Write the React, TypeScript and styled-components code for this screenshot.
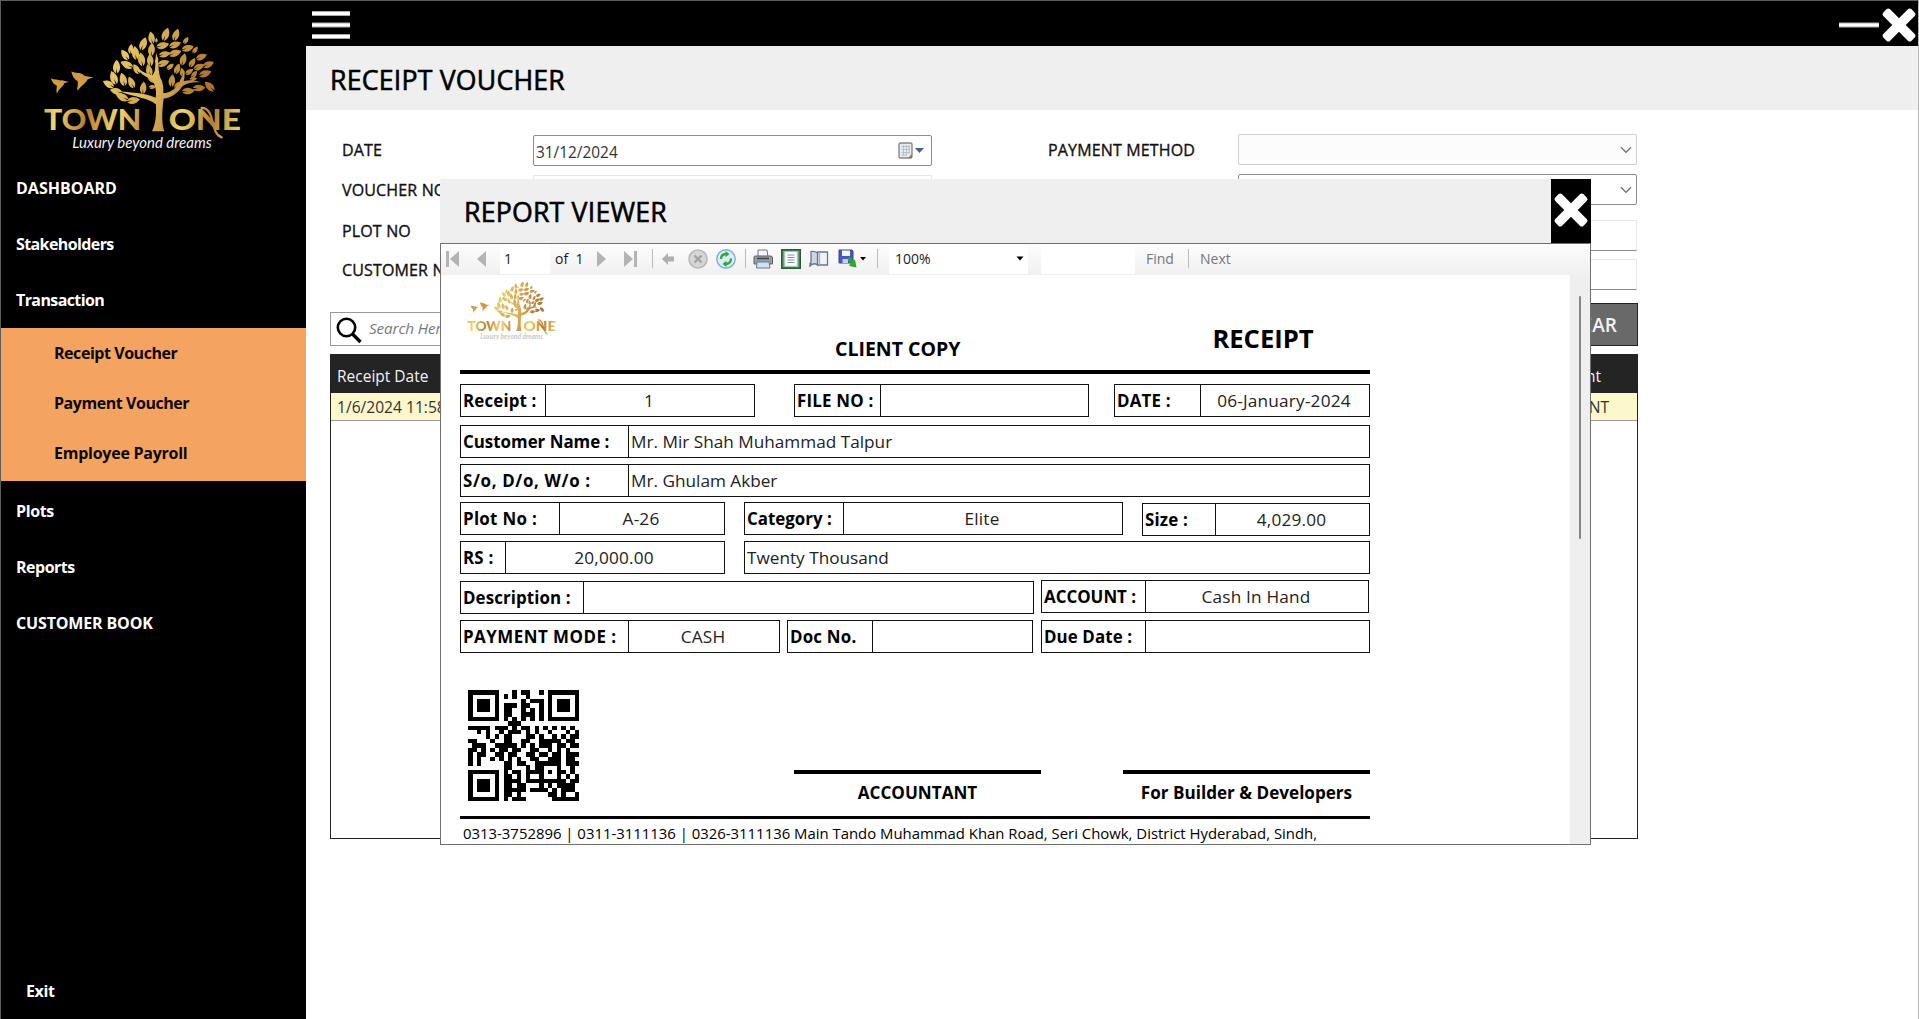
import React from "react";
import styled, { createGlobalStyle } from "styled-components";

const ui = `"Open Sans", "Noto Sans", sans-serif`;

const GlobalStyle = createGlobalStyle`
  * { box-sizing: border-box; }
  body { margin: 0; background: #fff; overflow: hidden; font-family: ${ui}; color: #111; }
`;

/* ---------- shell ---------- */
const Window = styled.div`
  position: relative;
  display: flex;
  width: 1919px;
  height: 1019px;
  overflow: hidden;
  background: #fff;
  border: 1px solid #5c5c5c;
  border-right-color: #b5b5b5;
  border-bottom: 0;
`;
const Sidebar = styled.nav`
  width: 305px;
  flex: none;
  display: flex;
  flex-direction: column;
  background: #000;
`;
const Brand = styled.div`
  height: 159px;
  padding: 26px 0 0 42px;
  flex: none;
`;
const MenuItem = styled.div<{ $ls?: number }>`
  height: 56px;
  flex: none;
  display: flex;
  align-items: center;
  padding: 0 0 1px 15px;
  color: #fff;
  font-weight: 700;
  font-size: 16px;
  letter-spacing: ${(p) => p.$ls ?? 0}px;
  white-space: nowrap;
`;
const SubMenu = styled.div`
  height: 153px;
  flex: none;
  margin-bottom: 2px;
  background: #f4a460;
`;
const SubItem = styled(MenuItem)`
  height: 50px;
  padding-left: 53px;
  color: #0b0704;
`;
const ExitItem = styled(MenuItem)`
  margin-top: auto;
  padding-left: 25px;
`;
const Main = styled.main`
  flex: 1;
  min-width: 0;
  display: flex;
  flex-direction: column;
`;
const TopBar = styled.header`
  height: 45px;
  flex: none;
  display: flex;
  align-items: center;
  background: #000;
  padding: 2px 1px 0 6px;
`;
const Spacer = styled.div`
  flex: 1;
`;
const TitleBand = styled.div`
  height: 64px;
  flex: none;
  display: flex;
  align-items: center;
  padding: 3px 0 0 24px;
  background: #efefef;
`;
const Title = styled.h1`
  margin: 0;
  font-weight: 500;
  font-size: 26.7px;
  letter-spacing: 0.2px;
  -webkit-text-stroke: 0.6px #000;
  color: #000;
`;

/* ---------- form ---------- */
const Content = styled.section`
  width: 1332px;
  padding: 24px 0 0 24px;
`;
const FormGrid = styled.div`
  display: grid;
  grid-template-columns: 203px 399px 116px 190px 399px;
  height: 169px;
`;
const FieldColumn = styled.div`
  display: flex;
  flex-direction: column;
`;
const LabelColumn = styled(FieldColumn)`
  padding-left: 12px;
`;
const RightLabelColumn = styled(FieldColumn)`
  grid-column: 4;
`;
const Label = styled.label<{ $drop?: number }>`
  height: 40px;
  flex: none;
  padding-top: ${(p) => 5 + (p.$drop ?? 0)}px;
  font-size: 16px;
  font-weight: 500;
  letter-spacing: 0.15px;
  -webkit-text-stroke: 0.35px #111;
  color: #111;
  white-space: nowrap;
`;
const Box = styled.div<{ $tone: "date" | "off" | "combo" | "line"; $top?: number }>`
  height: 31px;
  margin-top: ${(p) => p.$top ?? 0}px;
  display: flex;
  align-items: center;
  flex: none;
  padding: 0 ${(p) => (p.$tone === "date" ? 7 : 4)}px 0 2px;
  font-size: 15.4px;
  color: #333;
  border-radius: ${(p) => (p.$tone === "line" ? 0 : 2)}px;
  background: ${(p) => (p.$tone === "off" ? "#fcfcfc" : "#fff")};
  border: 1px solid ${(p) => (p.$tone === "off" ? "#cfcfcf" : p.$tone === "line" ? "#e8e8e8" : "#8c8c8c")};
  ${(p) => p.$tone === "line" && "border-bottom-color: #8a8a8a;"}
`;
const DateText = styled.span`
  flex: 1;
  padding-top: 3px;
`;
const ActionRow = styled.div`
  display: flex;
  align-items: center;
  justify-content: space-between;
  height: 43px;
`;
const SearchBox = styled.div`
  width: 400px;
  height: 34px;
  margin-top: 9px;
  border: 1px solid #999;
  display: flex;
  align-items: center;
  gap: 7px;
  padding: 2px 0 0 5px;
`;
const Hint = styled.span`
  font-style: italic;
  font-size: 15.2px;
  color: #777;
  letter-spacing: -0.1px;
  padding-bottom: 5px;
`;
const ClearButton = styled.button`
  width: 102px;
  height: 43px;
  padding: 0 0 0 2px;
  border: 1px solid #222;
  background: #696969;
  color: #f2f2f2;
  font: 600 19px ${ui};
`;
const Table = styled.div`
  height: 485px;
  margin-top: 8px;
  border: 1px solid #222;
`;
const TableRow = styled.div<{ $head?: boolean }>`
  height: ${(p) => (p.$head ? 38 : 28)}px;
  display: flex;
  justify-content: space-between;
  align-items: center;
  font-size: ${(p) => (p.$head ? 15.5 : 15.6)}px;
  padding: ${(p) => (p.$head ? "4px 36px 0 6px" : "0 28px 0 6px")};
  background: ${(p) => (p.$head ? "#242424" : "#fdf8cc")};
  color: ${(p) => (p.$head ? "#f2f2f2" : "#333")};
  border-bottom: ${(p) => (p.$head ? "0" : "1px solid #999")};
`;

/* ---------- report window ---------- */
const Viewer = styled.section`
  position: absolute;
  left: 439px;
  top: 178px;
  width: 1151px;
  height: 666px;
  display: flex;
  flex-direction: column;
  background: #fff;
  overflow: hidden;
`;
const ViewerHead = styled.div`
  height: 64px;
  flex: none;
  display: flex;
  background: #efefef;
`;
const ViewerTitle = styled(Title)`
  flex: 1;
  padding: 14px 0 0 24px;
`;
const CloseTile = styled.button`
  width: 40px;
  padding: 0 0 2px;
  border: 0;
  background: #000;
  display: flex;
  align-items: center;
  justify-content: center;
`;
const ViewerBody = styled.div`
  flex: 1;
  min-height: 0;
  border: 1px solid #707070;
  display: flex;
  flex-direction: column;
`;
const Toolbar = styled.div`
  height: 31px;
  flex: none;
  display: flex;
  background: linear-gradient(#fdfdfd, #f0f0f0);
`;
const Slot = styled.div<{ $w: number; $fill?: boolean; $gray?: boolean; $pad?: number }>`
  width: ${(p) => p.$w}px;
  height: 30px;
  padding-bottom: 1px;
  flex: none;
  display: flex;
  align-items: center;
  padding-left: ${(p) => p.$pad ?? 0}px;
  background: ${(p) => (p.$fill ? "#fff" : "transparent")};
  color: ${(p) => (p.$gray ? "#767676" : "#1c1c1c")};
  font-size: 14px;
  letter-spacing: 0;
  white-space: pre;
`;
const Divider = styled.div`
  width: 1px;
  height: 19px;
  background: #bbb;
`;
const Scroller = styled.div`
  flex: 1;
  min-height: 0;
  display: flex;
`;
const Page = styled.article`
  flex: 1;
  overflow: hidden;
  padding: 6px 0 0 19px;
  color: #000;
`;
const Track = styled.div`
  width: 20px;
  flex: none;
  padding: 21px 0 0 9px;
  background: #efefef;
`;
const Thumb = styled.div`
  width: 2px;
  height: 243px;
  border-radius: 1px;
  background: #858585;
`;
const Sheet = styled.div`
  width: 910px;
  display: flex;
  flex-direction: column;
`;
const SheetHead = styled.div`
  display: flex;
  height: 89px;
  flex: none;
  padding-left: 7px;
  font-weight: 700;
`;
const CopyName = styled.div`
  font-size: 19.5px;
  margin: 54px 0 0 278px;
`;
const DocName = styled.div`
  font-size: 25.6px;
  margin: 40px 0 0 252px;
`;
const Rule = styled.div<{ $h: number }>`
  height: ${(p) => p.$h}px;
  flex: none;
  background: #000;
`;
const Line = styled.div<{ $top: number }>`
  display: flex;
  height: 32px;
  flex: none;
  margin-top: ${(p) => p.$top}px;
`;
const Cell = styled.div<{ $w: number; $gap?: number; $drop?: number }>`
  width: ${(p) => p.$w}px;
  height: 33px;
  flex: none;
  margin: ${(p) => p.$drop ?? 0}px 0 0 ${(p) => p.$gap ?? 0}px;
  border: 1px solid #111;
  display: flex;
`;
const Name = styled.div<{ $w: number; $ls?: number }>`
  width: ${(p) => p.$w}px;
  flex: none;
  border-right: 1px solid #111;
  padding-left: 2px;
  font-size: 16.9px;
  line-height: 31px;
  font-weight: 700;
  letter-spacing: ${(p) => p.$ls ?? 0}px;
  white-space: nowrap;
`;
const Value = styled.div<{ $left?: boolean }>`
  flex: 1;
  padding: 0 ${(p) => (p.$left ? 0 : 2)}px 0 ${(p) => (p.$left ? 2 : 0)}px;
  text-align: ${(p) => (p.$left ? "left" : "center")};
  font-size: 17.2px;
  line-height: 31px;
  letter-spacing: ${(p) => (p.$left ? 0 : 0.2)}px;
  color: #222;
  white-space: nowrap;
`;
const Closing = styled.div`
  display: flex;
  align-items: flex-end;
  height: 126px;
  flex: none;
  margin-top: 38px;
  padding-left: 8px;
`;
const QrHolder = styled.div`
  height: 126px;
  width: 111px;
`;
const Signature = styled.div<{ $gap: number }>`
  width: 247px;
  height: 46px;
  margin-left: ${(p) => p.$gap}px;
  border-top: 4px solid #000;
  text-align: center;
  font-weight: 700;
  font-size: 17.1px;
  line-height: 38px;
  white-space: nowrap;
`;
const Address = styled.div`
  padding: 4px 0 0 3px;
  font-size: 14.9px;
  line-height: 20px;
  white-space: nowrap;
`;

/* ---------- drawings ---------- */
const leaves: number[][] = [
  [455, 113, -15, 1], [497, 103, 15, 1.1], [528, 104, 15, 1], [430, 131, 15, 1.1], [393, 147, 0, 0.8], [376, 165, -40, 1],
  [407, 159, -12, 1.1], [455, 148, 0, 1.05], [488, 135, 70, 1.05], [525, 133, 65, 1], [558, 120, 30, 0.65], [563, 143, 70, 1],
  [586, 149, 30, 0.65], [494, 161, 72, 0.95], [525, 158, 65, 1.05], [604, 169, 60, 0.95], [550, 178, 10, 1], [425, 178, -15, 1.1],
  [451, 180, -10, 1], [382, 194, -70, 1.1], [577, 187, 25, 0.85], [490, 188, 65, 1], [350, 200, -5, 1.1], [410, 207, -35, 0.9],
  [625, 192, 60, 0.95], [597, 199, 60, 0.95], [511, 199, 45, 0.7], [532, 206, 15, 0.9], [448, 211, -20, 1], [568, 214, 50, 0.75],
  [615, 219, 65, 1.05], [342, 233, -25, 1.15], [370, 238, -20, 1.1], [327, 252, -65, 1], [350, 273, -80, 1], [395, 247, -30, 1],
  [430, 263, 0, 1], [516, 241, 0, 1], [583, 222, 30, 0.7], [455, 238, -60, 0.75], [565, 271, 80, 1], [597, 262, 80, 1],
  [630, 259, -50, 1.05], [368, 291, -70, 1.1], [400, 299, 75, 1.05], [531, 254, 25, 0.6], [458, 259, 80, 0.6], [547, 216, -10, 0.7],
  [470, 120, -5, 0.4], [580, 235, 80, 0.6], [471, 180, 10, 0.5],
];
function Logo({ id, w, h, tag }: { id: string; w: number; h: number; tag: string }) {
  const leaf = `url(#${id}-leaf)`;
  const word = `url(#${id}-word)`;
  return (
    <svg width={w} height={h} viewBox="130 80 600 380" preserveAspectRatio="none">
      <defs>
        <linearGradient id={`${id}-leaf`} gradientUnits="userSpaceOnUse" x1="320" y1="130" x2="650" y2="240">
          <stop offset="0" stopColor="#f0d36d" />
          <stop offset=".5" stopColor="#dcb75c" />
          <stop offset="1" stopColor="#a86d2a" />
        </linearGradient>
        <linearGradient id={`${id}-word`} gradientUnits="userSpaceOnUse" x1="150" y1="0" x2="240" y2="20" spreadMethod="reflect">
          <stop offset="0" stopColor="#b67b32" />
          <stop offset="1" stopColor="#f1d56f" />
        </linearGradient>
      </defs>
      <g>
        {leaves.map(([x, y, r, s], i) => {
          const t = Math.max(0, Math.min(1, (x - 340 + (y - 110) * 0.5) / 340));
          const mix = (a: number, b: number) => Math.round(a + (b - a) * t);
          return (
            <path key={i} fill={`rgb(${mix(240, 176)},${mix(214, 116)},${mix(112, 44)})`} transform={`translate(${x} ${y}) rotate(${r}) scale(${s * 1.1})`} d="M2-18C12-7 12 8 1 16L0 2L-2 16C-12 7-10-6 2-18Z" />
          );
        })}
      </g>
      <path fill={leaf} d="M457 392C468 370 470 345 469 312C448 292 405 290 358 272C400 276 440 278 468 292C472 270 466 246 452 234C430 226 416 214 402 190C420 208 434 220 458 224C472 212 464 184 470 158C478 180 474 206 482 232C490 244 492 262 491 278C520 276 534 258 542 238C548 228 552 218 554 208C556 224 554 236 552 242C572 236 590 240 606 246C576 244 556 250 546 260C532 280 512 292 492 294C486 340 486 370 494 392Z" />
      <path fill="#cf9c45" d="M153 233C166 238 176 236 182 240C190 238 196 244 208 244L194 248C190 260 178 262 172 279C168 268 174 260 170 254C162 252 158 244 153 233ZM215 213C228 218 242 216 250 222C256 228 262 228 282 230L264 236C258 250 242 256 234 271C230 262 238 250 233 241C224 238 218 226 215 213Z" />
      <g fill={word} fontFamily="Lato, sans-serif" fontWeight="900" fontSize="87">
        <text x="133" y="389" textLength="292" lengthAdjust="spacingAndGlyphs">TOWN</text>
        <text x="507" y="389" textLength="217" lengthAdjust="spacingAndGlyphs">ONE</text>
      </g>
      <path fill="none" stroke={word} strokeWidth="7" strokeLinecap="round" d="M606 322C648 322 630 400 666 410" />
      <text x="218" y="441" fill={tag} fontFamily="Lato, sans-serif" fontStyle="italic" fontSize="46" textLength="418" lengthAdjust="spacingAndGlyphs">Luxury beyond dreams</text>
    </svg>
  );
}

const qr = [
  "#######...#.##..#.#######",
  "#.....#.#.#..#....#.....#",
  "#.###.#.....#.###.#.###.#",
  "#.###.#.###.##..#.#.###.#",
  "#.###.#.##..#.#.#.#.###.#",
  "#.....#.##..###.#.#.....#",
  "#######.#.#.#.#.#.#######",
  ".........###.............",
  "#####.###.#.##.#.#.#.#.#.",
  "..#.#..#.###.#.#..#...#.#",
  "....#.#.##...##.#..#.#.##",
  "##...#..##..##..#####.##.",
  ".###..#####.#.#.###.##.##",
  "##.#.#.##.##..##..#.#.#..",
  "#.##..##.##..##.##.##.###",
  "#.#..#.#.#.#..##..###.##.",
  "#.#.....##.##..######.###",
  "........##...#.##...#..#.",
  "#######.#.##.####.#.##.#.",
  "#.....#.##.#.#..#...#.#.#",
  "#.###.#.####.#########.##",
  "#.###.#.##.##...#.#.####.",
  "#.###.#.#####.####.#.###.",
  "#.....#.##.#......##.#..#",
  "#######.#.###......######",
];
const QrCode = () => (
  <svg width="111" height="111" viewBox="0 0 25 25" shapeRendering="crispEdges">
    {qr.map((row, y) => row.split("").map((c, x) => (c === "#" ? <rect key={`${x}-${y}`} x={x} y={y} width="1.02" height="1.02" /> : null)))}
  </svg>
);
const Cross = () => (
  <svg width="36" height="36" viewBox="-18 -18 36 36" fill="#fff">
    <rect x="-20" y="-4.8" width="40" height="9.6" rx="2.6" transform="rotate(45)" />
    <rect x="-20" y="-4.8" width="40" height="9.6" rx="2.6" transform="rotate(-45)" />
  </svg>
);
const Burger = () => (
  <svg width="38" height="28" viewBox="0 0 38 28">
    <path d="M0 2.5H38M0 14H38M0 25.5H38" stroke="#aaa" strokeWidth="5" />
    <path d="M0 2.5H38M0 14H38M0 25.5H38" stroke="#fff" strokeWidth="3" />
  </svg>
);
const Minimise = () => (
  <svg width="42" height="6" viewBox="0 0 42 6">
    <path d="M0 3H40" stroke="#aaa" strokeWidth="5" />
    <path d="M0 3H40" stroke="#fff" strokeWidth="3" />
  </svg>
);
const Magnifier = () => (
  <svg width="26" height="27" viewBox="0 0 26 27" fill="none" stroke="#000">
    <circle cx="10.5" cy="10.5" r="8.7" strokeWidth="2.6" />
    <path d="M16.5 17L24.5 25" strokeWidth="3.4" />
  </svg>
);
const Chevron = () => (
  <svg width="12" height="8" viewBox="0 0 12 8" fill="none" stroke="#777" strokeWidth="1.4">
    <path d="M1 1.3L6 6.3L11 1.3" />
  </svg>
);
const CalendarPick = () => (
  <svg width="26" height="18" viewBox="0 0 26 18">
    <rect x="1" y="1" width="13" height="15" rx="1.5" fill="#e8ebf0" stroke="#8b8585" strokeWidth="1.4" />
    <path d="M3.5 4.5H12M3.5 7.5H12M3.5 10.5H12M3.5 13H9M5.5 3V14M8.5 3V14M11.2 3V12" stroke="#b6bfcc" strokeWidth="1" />
    <path d="M10 16L14 12V16Z" fill="#777" />
    <path d="M17 6H26L21.5 11Z" fill="#47608c" />
  </svg>
);
const Nav = ({ flip, bar }: { flip?: boolean; bar?: boolean }) => (
  <svg width="14" height="16" viewBox="0 0 14 16" transform={flip ? "scale(-1 1)" : undefined} fill="#b4b4b4">
    {bar && <rect x="0" y="0" width="3" height="16" />}
    <path d={bar ? "M13 0V16L4 8Z" : "M10 0V16L1 8Z"} />
  </svg>
);
const Back = () => (
  <svg width="13" height="12" viewBox="0 0 13 12" fill="#b0b0b0">
    <path d="M0 6L6 0V3.5H12V8.5H6V12Z" />
  </svg>
);
const Stop = () => (
  <svg width="20" height="20" viewBox="0 0 20 20">
    <circle cx="10" cy="10" r="9" fill="#d6d6d6" stroke="#b9b9b9" strokeWidth="1.6" />
    <path d="M6.5 6.5L13.5 13.5M13.5 6.5L6.5 13.5" stroke="#a2a2a2" strokeWidth="2.4" />
  </svg>
);
const Refresh = () => (
  <svg width="20" height="20" viewBox="0 0 20 20">
    <circle cx="10" cy="10" r="9.2" fill="#dcecfb" stroke="#7fabdc" strokeWidth="1.4" />
    <path d="M5 10C5 6.500 7 5 10.500 5M15 9.500C15 13 13 15 9.500 15" fill="none" stroke="#2fa836" strokeWidth="2.300" />
    <path d="M9.500 2L13.500 5L9.500 8.300ZM10.500 11.800L6.500 15L10.500 18Z" fill="#2fa836" />
  </svg>
);
const Printer = () => (
  <svg width="20" height="20" viewBox="0 0 20 20">
    <path d="M5 1H14L15 8H5Z" fill="#f5f7fa" stroke="#72767c" />
    <path d="M1 8Q1 7 2.500 7H17.500Q19.500 7 19.500 9V15H1Z" fill="#989da4" stroke="#5d6268" />
    <path d="M4 9.500H16" stroke="#444" strokeWidth="1.500" />
    <path d="M4 13H16L17 19H3.500Z" fill="#cfe2f5" stroke="#6c7b8b" />
  </svg>
);
const PrintLayout = () => (
  <svg width="20" height="20" viewBox="0 0 20 20">
    <rect x=".8" y=".8" width="18.400" height="18.400" fill="#6ea374" stroke="#2c5a38" strokeWidth="1.600" />
    <rect x="4" y="3" width="12" height="14" fill="#fff" stroke="#dfe8ef" />
    <path d="M6.500 6H13.500M6.500 8.500H13.500M6.500 11H13.500M6.500 13.500H13.500" stroke="#7591ae" />
  </svg>
);
const PageSetup = () => (
  <svg width="20" height="18" viewBox="0 0 20 18" stroke="#68778a" strokeWidth="1.300">
    <path d="M8.500 2H18.500V15H8.500Z" fill="#eef2f7" />
    <path d="M2 1.500Q6 1 8.500 3V15Q5 12 1 16V13.500H2Z" fill="#cdd8e6" />
    <path d="M10.500 2.500V14.500" stroke="#aab6c4" />
  </svg>
);
const Export = () => (
  <svg width="28" height="20" viewBox="0 0 28 20">
    <path d="M1 1H14L15 2V14H1Z" fill="#4c56c0" stroke="#3a4299" />
    <path d="M4 1.500H12V7H4Z" fill="#f3f5ff" />
    <path d="M4.500 10H10V14H4.500Z" fill="#c9cef2" />
    <path d="M9 9.500L12 8L14.500 11.500L17 10.500L18.500 18.500L11 17L12.500 14.500Z" fill="#2aa82f" />
    <path d="M22 8H28L25 11.500Z" fill="#000" />
  </svg>
);
const DropArrow = () => (
  <svg width="8" height="5" viewBox="0 0 8 5">
    <path d="M.5 .5H7.500L4 4.500Z" fill="#000" />
  </svg>
);

function Field({ w, lw, label, value, left, gap, drop, ls }: {
  w: number; lw: number; label: string; value?: string; left?: boolean; gap?: number; drop?: number; ls?: number;
}) {
  return (
    <Cell $w={w} $gap={gap} $drop={drop}>
      <Name $w={lw} $ls={ls}>{label}</Name>
      <Value $left={left}>{value}</Value>
    </Cell>
  );
}

function Report() {
  return (
    <Sheet>
      <SheetHead>
        <Logo id="paper" w={90} h={61} tag="#c9c9c9" />
        <CopyName>CLIENT COPY</CopyName>
        <DocName>RECEIPT</DocName>
      </SheetHead>
      <Rule $h={4} />
      <Line $top={10}>
        <Field w={295} lw={85} label="Receipt :" ls={0.15} value="1" />
        <Field w={295} lw={86} gap={39} label="FILE NO :" ls={0.2} />
        <Field w={256} lw={86} gap={25} label="DATE :" ls={0.2} value="06-January-2024" />
      </Line>
      <Line $top={9}>
        <Field w={910} lw={168} label="Customer Name :" value="Mr. Mir Shah Muhammad Talpur" left />
      </Line>
      <Line $top={7}>
        <Field w={910} lw={168} label="S/o, D/o, W/o :" ls={0.65} value="Mr. Ghulam Akber" left />
      </Line>
      <Line $top={6}>
        <Field w={265} lw={99} label="Plot No :" ls={0.3} value="A-26" />
        <Field w={379} lw={99} gap={19} label="Category :" value="Elite" />
        <Field w={228} lw={73} gap={19} drop={1} label="Size :" ls={0.2} value="4,029.00" />
      </Line>
      <Line $top={7}>
        <Field w={265} lw={45} label="RS :" ls={0.2} value="20,000.00" />
        <Cell $w={626} $gap={19}><Value $left>Twenty Thousand</Value></Cell>
      </Line>
      <Line $top={8}>
        <Field w={574} lw={123} label="Description :" ls={0.1} />
        <Field w={328} lw={104} gap={7} drop={-1} label="ACCOUNT :" value="Cash In Hand" />
      </Line>
      <Line $top={7}>
        <Field w={320} lw={168} label="PAYMENT MODE :" ls={0.5} value="CASH" />
        <Field w={246} lw={85} gap={7} label="Doc No." ls={0.2} />
        <Field w={329} lw={104} gap={8} label="Due Date :" ls={0.1} />
      </Line>
      <Closing>
        <QrHolder><QrCode /></QrHolder>
        <Signature $gap={215}>ACCOUNTANT</Signature>
        <Signature $gap={82}>For Builder &amp; Developers</Signature>
      </Closing>
      <Rule $h={3} />
      <Address>0313-3752896 | 0311-3111136 | 0326-3111136 Main Tando Muhammad Khan Road, Seri Chowk, District Hyderabad, Sindh,</Address>
    </Sheet>
  );
}

function ReportToolbar() {
  return (
    <Toolbar>
      <Slot $w={35} $pad={5}><Nav bar /></Slot>
      <Slot $w={24}><Nav /></Slot>
      <Slot $w={50} $pad={4} $fill>1</Slot>
      <Slot $w={43} $pad={5}>of  1</Slot>
      <Slot $w={30}><Nav flip /></Slot>
      <Slot $w={29}><Nav flip bar /></Slot>
      <Slot $w={10}><Divider /></Slot>
      <Slot $w={26}><Back /></Slot>
      <Slot $w={28}><Stop /></Slot>
      <Slot $w={29}><Refresh /></Slot>
      <Slot $w={8}><Divider /></Slot>
      <Slot $w={28}><Printer /></Slot>
      <Slot $w={28}><PrintLayout /></Slot>
      <Slot $w={29}><PageSetup /></Slot>
      <Slot $w={39}><Export /></Slot>
      <Slot $w={12}><Divider /></Slot>
      <Slot $w={127} $pad={6} $fill>100%</Slot>
      <Slot $w={12} $fill><DropArrow /></Slot>
      <Slot $w={13} />
      <Slot $w={94} $fill />
      <Slot $w={53} $pad={11} $gray>Find</Slot>
      <Slot $w={12}><Divider /></Slot>
      <Slot $w={40} $gray>Next</Slot>
    </Toolbar>
  );
}

export default function App() {
  return (
    <>
      <GlobalStyle />
      <Window>
        <Sidebar>
          <Brand><Logo id="side" w={200} h={127} tag="#f4f4f4" /></Brand>
          <MenuItem>DASHBOARD</MenuItem>
          <MenuItem $ls={-0.6}>Stakeholders</MenuItem>
          <MenuItem $ls={-0.6}>Transaction</MenuItem>
          <SubMenu>
            <SubItem $ls={-0.45}>Receipt Voucher</SubItem>
            <SubItem $ls={-0.45}>Payment Voucher</SubItem>
            <SubItem $ls={-0.25}>Employee Payroll</SubItem>
          </SubMenu>
          <MenuItem $ls={-0.4}>Plots</MenuItem>
          <MenuItem $ls={-0.5}>Reports</MenuItem>
          <MenuItem $ls={-0.15}>CUSTOMER BOOK</MenuItem>
          <ExitItem $ls={-0.4}>Exit</ExitItem>
        </Sidebar>
        <Main>
          <TopBar>
            <Burger />
            <Spacer />
            <Minimise />
            <Cross />
          </TopBar>
          <TitleBand><Title>RECEIPT VOUCHER</Title></TitleBand>
          <Content>
            <FormGrid>
              <LabelColumn>
                <Label>DATE</Label>
                <Label>VOUCHER NO</Label>
                <Label $drop={1}>PLOT NO</Label>
                <Label>CUSTOMER NAME</Label>
              </LabelColumn>
              <FieldColumn>
                <Box $tone="date" $top={1}>
                  <DateText>31/12/2024</DateText>
                  <CalendarPick />
                </Box>
                <Box $tone="line" $top={9} />
              </FieldColumn>
              <RightLabelColumn><Label>PAYMENT METHOD</Label></RightLabelColumn>
              <FieldColumn>
                <Box $tone="off"><Spacer /><Chevron /></Box>
                <Box $tone="combo" $top={9}><Spacer /><Chevron /></Box>
                <Box $tone="line" $top={15} />
                <Box $tone="line" $top={8} />
              </FieldColumn>
            </FormGrid>
            <ActionRow>
              <SearchBox><Magnifier /><Hint>Search Here...</Hint></SearchBox>
              <ClearButton>CLEAR</ClearButton>
            </ActionRow>
            <Table>
              <TableRow $head><span>Receipt Date</span><span>Account</span></TableRow>
              <TableRow><span>1/6/2024 11:58</span><span>PAYMENT</span></TableRow>
            </Table>
          </Content>
        </Main>
        <Viewer>
          <ViewerHead>
            <ViewerTitle>REPORT VIEWER</ViewerTitle>
            <CloseTile><Cross /></CloseTile>
          </ViewerHead>
          <ViewerBody>
            <ReportToolbar />
            <Scroller>
              <Page><Report /></Page>
              <Track><Thumb /></Track>
            </Scroller>
          </ViewerBody>
        </Viewer>
      </Window>
    </>
  );
}
